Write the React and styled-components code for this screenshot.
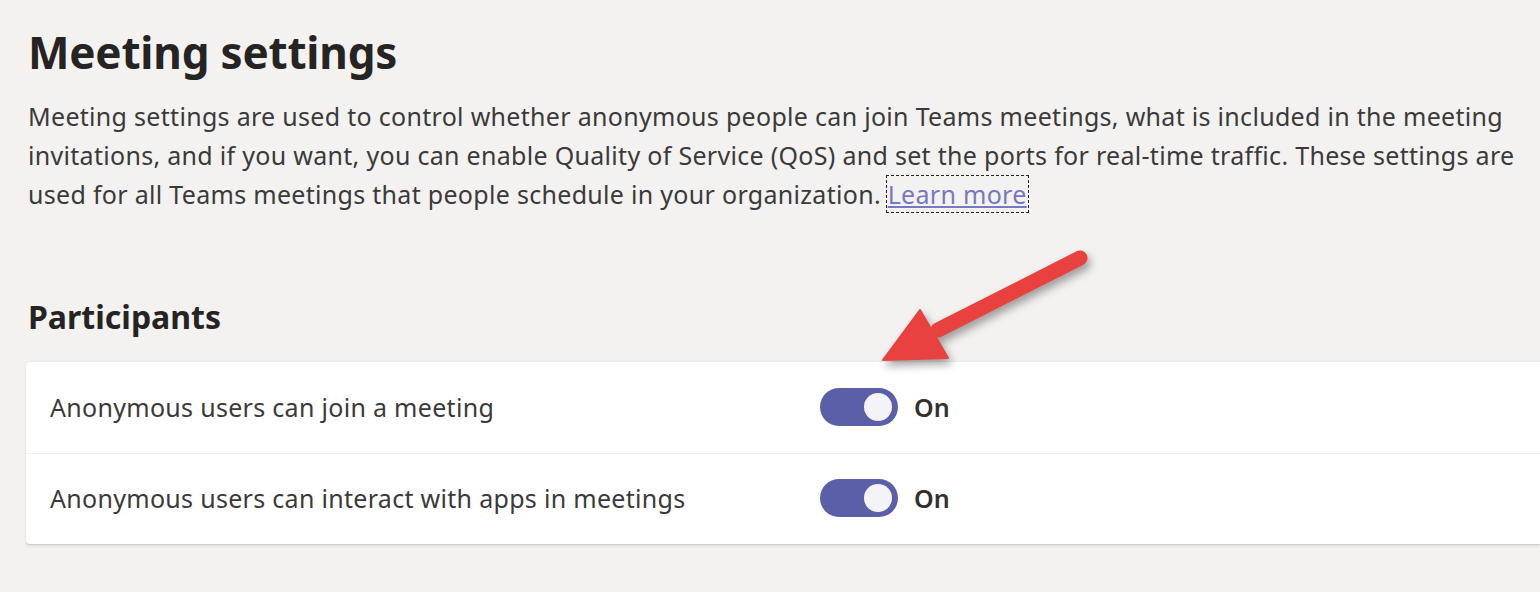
import React from 'react'
import styled, { createGlobalStyle } from 'styled-components'

const GlobalStyle = createGlobalStyle`
  html, body {
    margin: 0;
    padding: 0;
    background: #f3f2f1;
  }
  body {
    font-family: "Noto Sans", "Open Sans", sans-serif;
    color: #252423;
    overflow: hidden;
  }
`

const Page = styled.main`
  position: relative;
  width: 1540px;
  height: 592px;
  padding: 22px 0 0 28px;
  box-sizing: border-box;
`

const Title = styled.h1`
  margin: 0;
  font-size: 44px;
  font-weight: 700;
  line-height: 60px;
  letter-spacing: -0.2px;
`

const Intro = styled.p`
  margin: 15px 0 0;
  font-size: 25px;
  line-height: 39px;
  letter-spacing: 0.3px;
  white-space: nowrap;
  color: #3b3a39;
`

const Link = styled.a`
  color: #7678c2;
  text-decoration: underline;
  outline: 1px dashed #252423;
  outline-offset: 1px;
`

const SectionTitle = styled.h2`
  margin: 83px 0 0;
  font-size: 32px;
  font-weight: 700;
  line-height: 40px;
`

const Card = styled.section`
  margin: 25px 0 0 -2px;
  background: #fff;
  border-radius: 4px 0 0 4px;
  box-shadow: 0 1.6px 3.6px rgba(0, 0, 0, 0.1), 0 0.3px 0.9px rgba(0, 0, 0, 0.08);
`

const Row = styled.div`
  display: flex;
  align-items: center;
  height: 91px;
  padding: 0 0 2px 24px;
  box-sizing: border-box;
  & + & {
    border-top: 1px solid #f0efee;
  }
`

const Label = styled.span`
  width: 770px;
  font-size: 25px;
  letter-spacing: 0.3px;
  color: #3b3a39;
`

const Switch = styled.span`
  position: relative;
  display: inline-block;
  width: 78px;
  height: 38px;
  border-radius: 19px;
  background: ${p => (p.on ? '#5b5fa8' : '#c8c6c4')};
  &::after {
    content: '';
    position: absolute;
    top: 5px;
    left: ${p => (p.on ? '44px' : '6px')};
    width: 28px;
    height: 28px;
    border-radius: 50%;
    background: #f4f4f8;
  }
`

const State = styled.span`
  margin-left: 16px;
  font-size: 25px;
  font-weight: 600;
  color: #323130;
`

const Arrow = styled.svg`
  position: absolute;
  left: 860px;
  top: 230px;
  filter: drop-shadow(3px 5px 4px rgba(0, 0, 0, 0.35));
`

const settings = [
  { label: 'Anonymous users can join a meeting', on: true },
  { label: 'Anonymous users can interact with apps in meetings', on: true },
]

export default function App() {
  return (
    <>
      <GlobalStyle />
      <Page>
        <Title>Meeting settings</Title>
        <Intro>
          Meeting settings are used to control whether anonymous people can join Teams meetings, what is included in the meeting
          <br />
          invitations, and if you want, you can enable Quality of Service (QoS) and set the ports for real-time traffic. These settings are
          <br />
          used for all Teams meetings that people schedule in your organization. <Link href="#">Learn more</Link>
        </Intro>
        <SectionTitle>Participants</SectionTitle>
        <Card>
          {settings.map(s => (
            <Row key={s.label}>
              <Label>{s.label}</Label>
              <Switch on={s.on} />
              <State>{s.on ? 'On' : 'Off'}</State>
            </Row>
          ))}
        </Card>
        <Arrow width="250" height="150" viewBox="0 0 250 150">
          <path d="M220 28 L78 100" stroke="#e8413f" strokeWidth="15" strokeLinecap="round" fill="none" />
          <path d="M23 130 L60 80 L88 128 Z" fill="#e8413f" strokeLinejoin="round" stroke="#e8413f" strokeWidth="2" />
        </Arrow>
      </Page>
    </>
  )
}
